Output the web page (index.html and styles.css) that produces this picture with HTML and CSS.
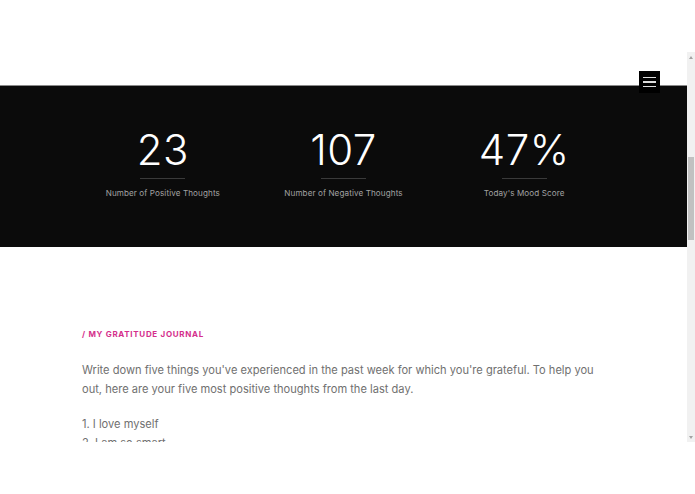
FILE: index.html
```html
<!DOCTYPE html>
<html>
<head>
<meta charset="utf-8">
<link rel="stylesheet" href="styles.css">
</head>
<body>
<div class="frame">
  <div class="viewport">
    <button class="menu-btn" aria-label="Menu">
      <span></span><span></span><span></span>
    </button>
    <div class="spacer"></div>
    <section class="stats">
      <div class="stats-inner">
        <div class="stat">
          <div class="num">23</div>
          <div class="rule"></div>
          <div class="label">Number of Positive Thoughts</div>
        </div>
        <div class="stat">
          <div class="num">107</div>
          <div class="rule"></div>
          <div class="label">Number of Negative Thoughts</div>
        </div>
        <div class="stat">
          <div class="num">47%</div>
          <div class="rule"></div>
          <div class="label">Today's Mood Score</div>
        </div>
      </div>
    </section>
    <section class="journal">
      <h2 class="eyebrow">/ My Gratitude Journal</h2>
      <p class="intro">Write down five things you've experienced in the past week for which you're grateful. To help you out, here are your five most positive thoughts from the last day.</p>
      <ol class="thoughts">
        <li>1. I love myself</li>
        <li>2. I am so smart</li>
      </ol>
    </section>
  </div>
  <div class="scrollbar">
    <div class="arrow up"></div>
    <div class="track"><div class="thumb"></div></div>
    <div class="arrow down"></div>
  </div>
</div>
</body>
</html>
```
FILE: styles.css
```css
* { box-sizing: border-box; }
html, body { margin: 0; padding: 0; background: #fff; }
body { font-family: "Inter", "Lato", "DejaVu Sans", sans-serif; }

.frame {
  margin-top: 52px;
  height: 390px;
  display: flex;
}
.viewport {
  position: relative;
  flex: 1;
  overflow: hidden;
  background: #fff;
}
.spacer { height: 33px; }

.menu-btn {
  position: absolute;
  left: 639px;
  top: 19px;
  width: 21px;
  height: 22px;
  background: #000;
  border: 0;
  padding: 0;
  display: flex;
  flex-direction: column;
  align-items: center;
  justify-content: center;
  gap: 3px;
  z-index: 2;
}
.menu-btn span {
  display: block;
  width: 13px;
  height: 1.5px;
  background: #ddd;
}

.stats {
  height: 162px;
  background: #0b0b0b;
  border-top: 1px solid #8a8a8a;
}
.stats-inner {
  width: 542px;
  margin: 0 auto;
  display: grid;
  grid-template-columns: repeat(3, 1fr);
  padding-top: 41px;
}
.stat {
  display: flex;
  flex-direction: column;
  align-items: center;
}
.num {
  color: #fff;
  font-weight: 300;
  font-size: 42px;
  line-height: 46px;
  letter-spacing: 0.5px;
}
.rule {
  width: 45px;
  height: 1px;
  background: #3a3a3a;
  margin-top: 5px;
}
.label {
  margin-top: 9px;
  color: #a2a2a2;
  font-size: 8.1px;
  letter-spacing: 0.1px;
}

.journal {
  padding: 81px 40px 0 82px;
}
.eyebrow {
  margin: 0;
  color: #d42f8c;
  font-size: 8px;
  font-weight: 700;
  text-transform: uppercase;
  letter-spacing: 0.7px;
  line-height: 12px;
}
.intro {
  margin: 21px 0 0 0;
  color: #707070;
  font-size: 11.1px;
  line-height: 19px;
  max-width: 526px;
}
.thoughts {
  list-style: none;
  margin: 16px 0 0 0;
  padding: 0;
  color: #707070;
  font-size: 11.1px;
  line-height: 19px;
}

.scrollbar {
  width: 8px;
  background: #f1f1f1;
  display: flex;
  flex-direction: column;
}
.arrow {
  height: 10px;
  display: flex;
  align-items: center;
  justify-content: center;
}
.arrow::before {
  content: "";
  width: 0;
  height: 0;
  border-left: 2.5px solid transparent;
  border-right: 2.5px solid transparent;
}
.arrow.up::before { border-bottom: 3px solid #a3a3a3; }
.arrow.down::before { border-top: 3px solid #a3a3a3; }
.track { flex: 1; padding: 95px 1px 0 1px; }
.thumb { height: 83px; background: #c1c1c1; }
```
